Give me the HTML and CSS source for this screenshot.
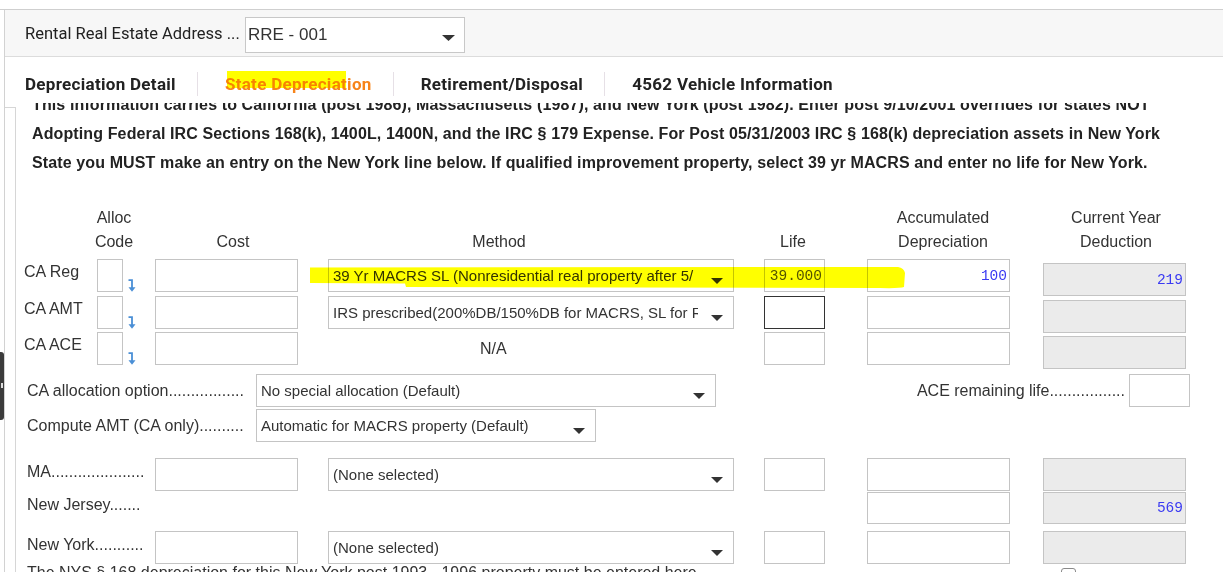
FILE: index.html
```html
<!DOCTYPE html>
<html>
<head>
<meta charset="utf-8">
<title>State Depreciation</title>
<link rel="stylesheet" href="styles.css">
</head>
<body>
<div class="page">
  <div class="panel">
    <div class="frame">
      <div class="hdr">
        <span class="hdr-label">Rental Real Estate Address ...</span>
        <div class="hdr-select">
          <span>RRE - 001</span>
          <svg class="caret-lg" width="13" height="6" viewBox="0 0 13 6"><path d="M0 0H13L6.5 6Z" fill="#333"/></svg>
        </div>
      </div>
      <nav class="tabs">
        <div class="tab first">Depreciation Detail</div>
        <div class="sep"></div>
        <div class="tab active">State Depreciation</div>
        <div class="sep"></div>
        <div class="tab">Retirement/Disposal</div>
        <div class="sep"></div>
        <div class="tab">4562 Vehicle Information</div>
      </nav>
      <div class="body">
        <div class="gutter"></div>
        <div class="scroll">
          <div class="inner">
            <div class="note">
              <div>This information carries to California (post 1986), Massachusetts (1987), and New York (post 1982). Enter post 9/10/2001 overrides for states NOT</div>
              <div>Adopting Federal IRC Sections 168(k), 1400L, 1400N, and the IRC § 179 Expense. For Post 05/31/2003 IRC § 168(k) depreciation assets in New York</div>
              <div>State you MUST make an entry on the New York line below. If qualified improvement property, select 39 yr MACRS and enter no life for New York.</div>
            </div>

            <div class="colhead">
              <div class="ch"></div>
              <div class="ch"><div>Alloc</div><div>Code</div></div>
              <div class="ch"><div>Cost</div></div>
              <div class="ch"><div>Method</div></div>
              <div class="ch"><div>Life</div></div>
              <div class="ch"><div>Accumulated</div><div>Depreciation</div></div>
              <div class="ch"></div>
              <div class="ch"><div>Current Year</div><div>Deduction</div></div>
            </div>

            <div class="cols ca">
              <div class="lbl c-lbl">CA Reg</div>
              <div class="box c-alloc"></div>
              <svg class="arr c-arr" width="9" height="13" viewBox="0 0 9 13"><path d="M1.5 1.2H5V9" fill="none" stroke="#4a8fd6" stroke-width="1.8"/><path d="M1.5 8.3H8.5L5 12.8Z" fill="#4a8fd6"/></svg>
              <div class="box c-cost"></div>
              <div class="sel c-method"><span>39 Yr MACRS SL (Nonresidential real property after 5/</span><svg width="12" height="6" viewBox="0 0 12 6"><path d="M0 0H12L6 6Z" fill="#333"/></svg></div>
              <div class="box num c-life grayval">39.000</div>
              <div class="box num c-accum blue">100</div>
              <div class="box num ro cy c-cy blue">219</div>

              <div class="lbl c-lbl">CA AMT</div>
              <div class="box c-alloc"></div>
              <svg class="arr c-arr" width="9" height="13" viewBox="0 0 9 13"><path d="M1.5 1.2H5V9" fill="none" stroke="#4a8fd6" stroke-width="1.8"/><path d="M1.5 8.3H8.5L5 12.8Z" fill="#4a8fd6"/></svg>
              <div class="box c-cost"></div>
              <div class="sel c-method"><span>IRS prescribed(200%DB/150%DB for MACRS, SL for Recovery Property)</span><svg width="12" height="6" viewBox="0 0 12 6"><path d="M0 0H12L6 6Z" fill="#333"/></svg></div>
              <div class="box focus c-life"></div>
              <div class="box c-accum"></div>
              <div class="box ro cy c-cy"></div>

              <div class="lbl c-lbl">CA ACE</div>
              <div class="box c-alloc"></div>
              <svg class="arr c-arr" width="9" height="13" viewBox="0 0 9 13"><path d="M1.5 1.2H5V9" fill="none" stroke="#4a8fd6" stroke-width="1.8"/><path d="M1.5 8.3H8.5L5 12.8Z" fill="#4a8fd6"/></svg>
              <div class="box c-cost"></div>
              <div class="na c-method">N/A</div>
              <div class="box c-life"></div>
              <div class="box c-accum"></div>
              <div class="box ro cy c-cy"></div>
            </div>

            <div class="alloc">
              <div class="lbl2">CA allocation option.................</div>
              <div class="sel wide"><span>No special allocation (Default)</span><svg width="12" height="6" viewBox="0 0 12 6"><path d="M0 0H12L6 6Z" fill="#333"/></svg></div>
              <div></div>
              <div class="lbl2 ace">ACE remaining life.................</div>
              <div class="box"></div>

              <div class="lbl2">Compute AMT (CA only)..........</div>
              <div class="sel mid"><span>Automatic for MACRS property (Default)</span><svg width="12" height="6" viewBox="0 0 12 6"><path d="M0 0H12L6 6Z" fill="#333"/></svg></div>
            </div>

            <div class="states">
              <div class="cols srow">
                <div class="lbl3 c-slbl">MA.....................</div>
                <div class="box c-cost"></div>
                <div class="sel c-method"><span>(None selected)</span><svg width="12" height="6" viewBox="0 0 12 6"><path d="M0 0H12L6 6Z" fill="#333"/></svg></div>
                <div class="box c-life"></div>
                <div class="box c-accum"></div>
                <div class="box ro c-cy"></div>
              </div>
              <div class="cols srow nj">
                <div class="lbl3 nj-lbl c-slbl">New Jersey.......</div>
                <div class="box c-accum"></div>
                <div class="box num ro c-cy blue">569</div>
              </div>
              <div class="cols srow ny">
                <div class="lbl3 c-slbl">New York...........</div>
                <div class="box c-cost"></div>
                <div class="sel c-method"><span>(None selected)</span><svg width="12" height="6" viewBox="0 0 12 6"><path d="M0 0H12L6 6Z" fill="#333"/></svg></div>
                <div class="box c-life"></div>
                <div class="box c-accum"></div>
                <div class="box ro c-cy"></div>
              </div>
            </div>

            <div class="final">
              <div class="final-text">The NYS § 168 depreciation for this New York post 1993 - 1996 property must be entered here</div>
              <div class="chk"></div>
            </div>
          </div>
        </div>
      </div>
    </div>
  </div>

  <div class="handle"><span></span></div>
  <div class="hl hl-tab"></div>
  <svg class="hl-stroke" width="600" height="24" viewBox="0 0 600 24"><path d="M0 1.5 L588 1 Q594 2 595 7 L594 21 Q590 22.5 570 22 L96 21 L95 17.5 L0 17 Z" fill="#ffff00"/></svg>
</div>
</body>
</html>
```

FILE: styles.css
```css
* { box-sizing: border-box; }

html, body {
  margin: 0;
  padding: 0;
  background: #fff;
}

body {
  width: 1223px;
  height: 572px;
  overflow: hidden;
  font-family: "Liberation Sans", Arial, sans-serif;
  color: #333;
}

.page {
  position: relative;
  height: 572px;
  padding-top: 9px;
}

.panel {
  height: 563px;
  border-top: 1px solid #cfcfcf;
  display: flex;
}

.frame {
  flex: 1;
  margin-left: 4px;
  border-left: 1px solid #d2d2d2;
  display: flex;
  flex-direction: column;
  min-width: 0;
}

/* header */
.hdr {
  height: 47px;
  flex: none;
  background: #f7f7f7;
  border-bottom: 1px solid #dcdcdc;
  display: flex;
  align-items: center;
  padding-left: 20px;
}

.hdr-label {
  width: 220px;
  font-family: Roboto, "Liberation Sans", sans-serif;
  font-size: 16.5px;
  color: #222;
  white-space: nowrap;
}

.hdr-select {
  width: 220px;
  height: 36px;
  margin-top: 4px;
  background: #fff;
  border: 1px solid #c8c8c8;
  display: flex;
  align-items: center;
  padding-left: 2px;
  font-size: 17px;
  color: #333;
}

.hdr-select span { flex: 1; }

.caret-lg {
  align-self: flex-end;
  margin: 0 9px 11px 0;
  flex: none;
}

/* tabs */
.tabs {
  height: 46px;
  flex: none;
  display: flex;
  align-items: flex-end;
  padding: 0 0 7px 20px;
  font-family: Roboto, "Liberation Sans", sans-serif;
  font-weight: 700;
  font-size: 17px;
  letter-spacing: 0.3px;
  color: #222;
}

.tab {
  line-height: 24px;
  padding: 0 21px 0 27px;
  white-space: nowrap;
}

.tab.first { padding-left: 0; }

.tab.active { color: #f7841a; }

.sep {
  width: 1px;
  height: 24px;
  background: #e6e0e6;
}

/* body */
.body {
  flex: 1;
  display: flex;
  overflow: hidden;
  min-height: 0;
}

.gutter {
  width: 10px;
  height: 0;
  margin-top: 4px;
  border-top: 1px solid #d6d6d6;
  flex: none;
}

.scroll {
  flex: 1;
  margin-top: 4px;
  border-left: 1px solid #d6d6d6;
  min-width: 0;
}

.inner {
  margin-top: -17px;
  padding-left: 8px;
}

.note {
  margin-left: 8px;
  font-weight: bold;
  font-size: 16px;
  letter-spacing: 0.12px;
  line-height: 29px;
  color: #222;
  white-space: nowrap;
}

/* column headers */
.colhead {
  margin-top: 29px;
  display: grid;
  grid-template-columns: 50px 80px 158px 374px 214px 86px 60px 140px;
  height: 48px;
  font-size: 16px;
  line-height: 24px;
  color: #333;
}

.ch {
  display: flex;
  flex-direction: column;
  justify-content: flex-end;
  align-items: center;
  white-space: nowrap;
}

/* shared field grid */
.cols {
  display: grid;
  grid-template-columns: 73px 26px 32px 143px 30px 406px 30px 61px 42px 143px 33px 143px;
}

.c-lbl { grid-column: 1; }
.c-alloc { grid-column: 2; }
.c-arr { grid-column: 3; }
.c-cost { grid-column: 4; }
.c-method { grid-column: 6; }
.c-life { grid-column: 8; }
.c-accum { grid-column: 10; }
.c-cy { grid-column: 12; }
.c-slbl { grid-column: 1 / span 3; }

.ca {
  margin-top: 5px;
  grid-auto-rows: 33px;
  row-gap: 3.5px;
}

.lbl {
  font-size: 16px;
  line-height: 24px;
  padding-top: 1px;
  white-space: nowrap;
  color: #333;
}

.arr {
  align-self: end;
  margin-left: 4px;
}

.box {
  border: 1px solid #c4c4c4;
  background: #fff;
}

.box.ro { background: #ebebeb; }

.box.focus { border-color: #333; }

.cy {
  align-self: start;
  height: 33px;
  margin-top: 4px;
}

.num {
  display: flex;
  align-items: center;
  justify-content: flex-end;
  padding-right: 2px;
  font-family: "Liberation Mono", "Courier New", monospace;
  font-size: 14.5px;
}

.blue { color: #3a3af2; }
.grayval { color: #555; }

.sel {
  display: flex;
  align-items: center;
  border: 1px solid #c4c4c4;
  background: #fff;
  padding-left: 4px;
  font-size: 15px;
  color: #333;
  white-space: nowrap;
  overflow: hidden;
}

.sel span {
  flex: 1;
  overflow: hidden;
  min-width: 0;
}

.sel svg {
  flex: none;
  align-self: flex-end;
  margin: 0 10px 7px 13px;
}

.na {
  display: flex;
  align-items: center;
  padding-left: 152px;
  font-size: 16px;
  color: #333;
}

/* allocation options */
.alloc {
  margin-top: 9px;
  width: 1166px;
  display: grid;
  grid-template-columns: 232px 460px 1fr auto 61px;
  grid-template-rows: 33px 33px;
  row-gap: 2px;
}

.lbl2 {
  align-self: center;
  padding-left: 3px;
  font-size: 16px;
  line-height: 24px;
  white-space: nowrap;
  color: #333;
}

.lbl2.ace {
  padding-left: 0;
  margin-right: 4px;
}

.sel.wide { width: 460px; }
.sel.mid { width: 340px; }

/* state rows */
.states { margin-top: 16px; }

.srow { height: 33px; }
.srow.nj { height: 32px; margin-top: 1px; }
.srow.ny { margin-top: 7px; }

.lbl3 {
  padding: 2px 0 0 3px;
  font-size: 16px;
  line-height: 24px;
  white-space: nowrap;
  color: #333;
}

.nj-lbl { padding-top: 1px; }

.final {
  display: grid;
  grid-template-columns: 1034px 16px;
  padding-left: 3px;
  font-size: 16px;
  line-height: 18px;
  color: #333;
  white-space: nowrap;
}

.final-text { overflow: hidden; }

.chk {
  width: 15px;
  height: 15px;
  margin-top: 4px;
  border: 1px solid #8a8a8a;
  border-radius: 3px;
  background: #fff;
}

/* overlays */
.handle {
  position: absolute;
  left: 0;
  top: 352px;
  width: 4px;
  height: 68px;
  background: #3b3b3b;
  border-radius: 0 3px 3px 0;
}

.handle span {
  position: absolute;
  left: 1px;
  top: 31px;
  width: 2px;
  height: 5px;
  background: #ddd;
}

.hl {
  position: absolute;
  background: #ffff00;
  mix-blend-mode: multiply;
  pointer-events: none;
}

.hl-tab {
  left: 227px;
  top: 71px;
  width: 119px;
  height: 17px;
}

.hl-stroke {
  position: absolute;
  left: 310px;
  top: 266px;
  mix-blend-mode: multiply;
  pointer-events: none;
}
```
